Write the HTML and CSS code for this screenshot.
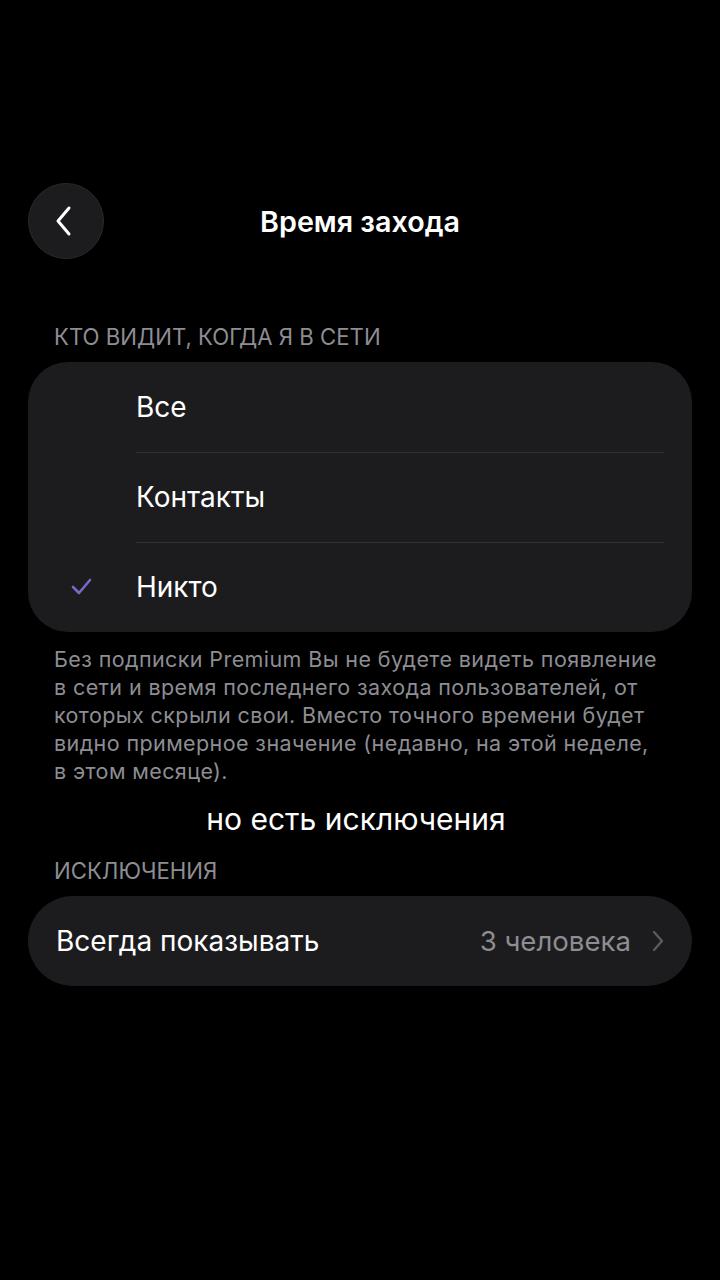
FILE: index.html
```html
<!DOCTYPE html>
<html lang="ru">
<head>
<meta charset="UTF-8">
<meta name="viewport" content="width=device-width, initial-scale=1.0">
<title>Время захода</title>
<link rel="stylesheet" href="styles.css">
</head>
<body>
<div class="screen">
  <header class="top-bar">
    <button class="back-btn" aria-label="Назад">
      <svg width="22" height="34" viewBox="0 0 22 34"><path d="M16 4 L5 17 L16 30" fill="none" stroke="#fff" stroke-width="3" stroke-linecap="round" stroke-linejoin="round"/></svg>
    </button>
    <h1 class="title">Время захода</h1>
  </header>

  <div class="section-title">КТО ВИДИТ, КОГДА Я В СЕТИ</div>
  <div class="card">
    <div class="option">
      <span class="check"></span>
      <span class="option-label">Все</span>
    </div>
    <div class="option">
      <span class="check"></span>
      <span class="option-label">Контакты</span>
    </div>
    <div class="option">
      <span class="check">
        <svg width="22" height="18" viewBox="0 0 22 18"><path d="M2 9 L8 15 L19 2" fill="none" stroke="#7a67c9" stroke-width="2.6" stroke-linecap="round" stroke-linejoin="round"/></svg>
      </span>
      <span class="option-label">Никто</span>
    </div>
  </div>
  <p class="note">Без подписки Premium Вы не будете видеть появление в сети и время последнего захода пользователей, от которых скрыли свои. Вместо точного времени будет видно примерное значение (недавно, на этой неделе, в этом месяце).</p>

  <div class="caption">но есть исключения</div>

  <div class="section-title">ИСКЛЮЧЕНИЯ</div>
  <div class="card pill">
    <span class="row-label">Всегда показывать</span>
    <span class="row-value">3 человека</span>
    <svg class="chevron" width="12" height="22" viewBox="0 0 12 22"><path d="M2 2 L10 11 L2 20" fill="none" stroke="#5a5a5e" stroke-width="2.4" stroke-linecap="round" stroke-linejoin="round"/></svg>
  </div>
</div>
</body>
</html>
```

FILE: styles.css
```css
body {
  margin: 0;
  background: #000;
  color: #fff;
  font-family: Inter, Roboto, "Liberation Sans", sans-serif;
}
.screen {
  width: 720px;
  height: 1280px;
  padding: 183px 28px 0;
  box-sizing: border-box;
}
.top-bar {
  display: flex;
  align-items: center;
  height: 76px;
  position: relative;
}
.back-btn {
  width: 76px;
  height: 76px;
  border-radius: 50%;
  background: #1c1c1e;
  border: 1px solid #2a2a2c;
  display: flex;
  align-items: center;
  justify-content: center;
  padding: 0 4px 0 0;
}
.title {
  position: absolute;
  left: 0;
  right: 0;
  text-align: center;
  margin: 0;
  font-size: 28.7px;
  font-weight: 600;
  pointer-events: none;
}
.section-title {
  color: #8d8d93;
  font-size: 22.2px;
  padding-left: 26px;
  line-height: 24px;
  margin-bottom: 13px;
}
.top-bar + .section-title {
  margin-top: 66px;
}
.card {
  background: #1c1c1e;
  border-radius: 40px;
}
.option {
  display: flex;
  align-items: center;
  height: 90px;
}
.check {
  width: 108px;
  display: flex;
  justify-content: center;
}
.option-label {
  flex: 1;
  font-size: 28px;
  height: 90px;
  line-height: 90px;
  margin-right: 28px;
}
.option + .option .option-label {
  border-top: 1px solid #323235;
  height: 89px;
  line-height: 89px;
}
.note {
  color: #8d8d93;
  font-size: 21.5px;
  letter-spacing: 0.4px;
  line-height: 28px;
  margin: 13px 0 0;
  padding: 0 26px;
}
.caption {
  text-align: center;
  font-size: 30px;
  margin-top: 16px;
  padding-right: 8px;
}
.caption + .section-title {
  margin-top: 22px;
}
.pill {
  height: 90px;
  border-radius: 45px;
  display: flex;
  align-items: center;
  padding: 0 28px;
}
.row-label {
  flex: 1;
  font-size: 28px;
}
.row-value {
  color: #8d8d93;
  font-size: 27.6px;
  margin-right: 21px;
}
```
